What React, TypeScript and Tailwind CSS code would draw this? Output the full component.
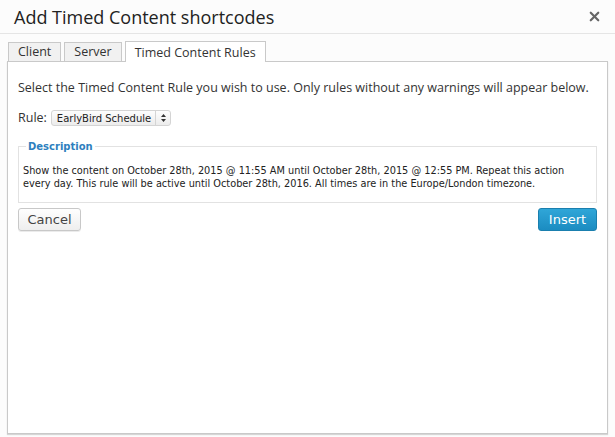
import { X } from 'lucide-react';

const sans = { fontFamily: '"Open Sans", "Noto Sans", sans-serif' };
const verdana = { fontFamily: '"DejaVu Sans", Verdana, sans-serif' };

function Tab({ label, active }: { label: string; active?: boolean }) {
  return (
    <div
      className={
        active
          ? 'relative -mb-px h-[21px] border border-b-0 border-[#c9c9c9] bg-white px-[9px] pt-[2px] text-[12.5px] leading-[17px] text-[#333]'
          : 'h-[19px] border border-b-0 border-[#c9c9c9] bg-[#f1f1f1] px-[9px] text-[12.5px] leading-[18px] text-[#333]'
      }
    >
      {label}
    </div>
  );
}

export default function App() {
  return (
    <div className="flex h-[437px] w-[615px] flex-col bg-[#fcfcfc] text-[#333]" style={sans}>
      <div className="flex h-[34px] shrink-0 items-center justify-between border-b border-[#e5e5e5] pl-[14px] pr-[13px]">
        <h1 className="text-[18px] font-normal leading-none text-[#222]">Add Timed Content shortcodes</h1>
        <X size={15} strokeWidth={3.5} className="text-[#666]" />
      </div>

      <div className="flex flex-1 flex-col px-[7px] pb-[3px] pt-[7px]">
        <div className="flex items-end gap-[3px] pl-px">
          <Tab label="Client" />
          <Tab label="Server" />
          <Tab label="Timed Content Rules" active />
        </div>

        <div className="flex-1 border border-[#c9c9c9] bg-white px-[10px] pt-[17px] shadow-[0_1px_1px_rgba(0,0,0,0.15)]">
          <p className="text-[12.5px] leading-[18px]">
            Select the Timed Content Rule you wish to use. Only rules without any warnings will appear below.
          </p>

          <div className="mt-[12px] flex items-center gap-[4px] text-[12.5px]">
            <span>Rule:</span>
            <div
              className="flex h-[16px] items-center rounded-[3px] border border-[#d4d4d4] bg-gradient-to-b from-[#fdfdfd] to-[#ececec] pl-[5px] text-[10px] text-[#222]"
              style={verdana}
            >
              <span>EarlyBird Schedule</span>
              <span className="ml-[4px] flex h-full w-[15px] items-center justify-center border-l border-[#d4d4d4]">
                <svg width="5" height="8" viewBox="0 0 5 8">
                  <path d="M0 3 L2.5 0 L5 3 Z M0 5 L2.5 8 L5 5 Z" fill="#333" />
                </svg>
              </span>
            </div>
          </div>

          <fieldset className="mt-[11px] border border-[#e2e2e2] px-[4px] pb-[12px] pt-[10px]" style={verdana}>
            <legend className="ml-[3px] px-[2px] text-[10px] font-bold text-[#2e7fbe]">Description</legend>
            <p className="whitespace-nowrap text-[9.75px] leading-[13px] text-[#222]">
              Show the content on October 28th, 2015 @ 11:55 AM until October 28th, 2015 @ 12:55 PM. Repeat this action
              <br />
              every day. This rule will be active until October 28th, 2016. All times are in the Europe/London timezone.
            </p>
          </fieldset>

          <div className="mt-[5px] flex justify-between" style={verdana}>
            <button className="h-[23px] w-[63px] rounded-[3px] border border-[#c8c8c8] bg-gradient-to-b from-[#fefefe] to-[#eeeeee] text-[13px] text-[#444] shadow-[0_1px_0_rgba(0,0,0,0.08)]">
              Cancel
            </button>
            <button className="h-[23px] w-[59px] rounded-[3px] border border-[#1a7fae] bg-gradient-to-b from-[#2fa6d8] to-[#1b8cc1] text-[13px] text-white">
              Insert
            </button>
          </div>
        </div>
      </div>
    </div>
  );
}
